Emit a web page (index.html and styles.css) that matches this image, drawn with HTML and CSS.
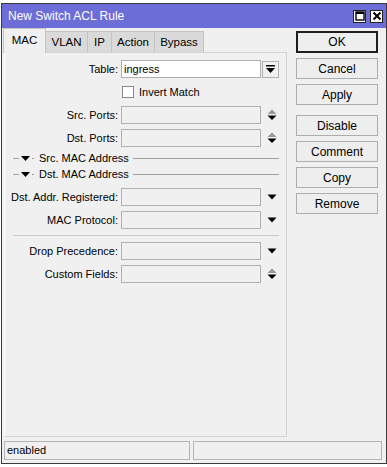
FILE: index.html
```html
<!DOCTYPE html>
<html lang="en">
<head>
    <meta charset="UTF-8">
    <meta name="viewport" content="width=device-width, initial-scale=1.0">
    <title>New Switch ACL Rule</title>
    <link rel="stylesheet" href="styles.css">
</head>
<body>
    <div class="window">
        <div class="titlebar">
            <span class="title">New Switch ACL Rule</span>
            <div class="title-buttons">
                <span class="tbtn">
                    <svg width="10" height="10" viewBox="0 0 10 10"><rect x="1" y="1" width="8" height="8" fill="none" stroke="#000" stroke-width="1.4"/><rect x="1" y="1" width="8" height="2" fill="#000"/></svg>
                </span>
                <span class="tbtn">
                    <svg width="10" height="10" viewBox="0 0 10 10"><path d="M1.5 1.5 L8.5 8.5 M8.5 1.5 L1.5 8.5" stroke="#000" stroke-width="2"/></svg>
                </span>
            </div>
        </div>

        <div class="content">
            <div class="main">
                <div class="tabs">
                    <div class="tab active mac">MAC</div>
                    <div class="tab vlan">VLAN</div>
                    <div class="tab ip">IP</div>
                    <div class="tab action">Action</div>
                    <div class="tab bypass">Bypass</div>
                </div>

                <div class="panel">
                    <div class="row">
                        <label>Table:</label>
                        <div class="input white">ingress</div>
                        <span class="drop-btn">
                            <svg width="9" height="8" viewBox="0 0 9 8"><rect x="0" y="0" width="9" height="1.5" fill="#000"/><path d="M0 3 H9 L4.5 8 Z" fill="#000"/></svg>
                        </span>
                    </div>

                    <div class="row">
                        <label></label>
                        <div class="check-wrap">
                            <span class="checkbox"></span>
                            <span>Invert Match</span>
                        </div>
                    </div>

                    <div class="row">
                        <label>Src. Ports:</label>
                        <div class="input"></div>
                        <span class="icon">
                            <svg width="10" height="12" viewBox="0 0 10 12"><path d="M0.5 5 L5 0.5 L9.5 5 Z" fill="#999"/><path d="M0.5 6.5 H9.5 L5 11 Z" fill="#000"/></svg>
                        </span>
                    </div>

                    <div class="row">
                        <label>Dst. Ports:</label>
                        <div class="input"></div>
                        <span class="icon">
                            <svg width="10" height="12" viewBox="0 0 10 12"><path d="M0.5 5 L5 0.5 L9.5 5 Z" fill="#999"/><path d="M0.5 6.5 H9.5 L5 11 Z" fill="#000"/></svg>
                        </span>
                    </div>

                    <div class="section first">
                        <span class="dash"></span>
                        <svg width="9" height="5" viewBox="0 0 9 5"><path d="M0 0 H9 L4.5 5 Z" fill="#000"/></svg>
                        <span class="dot"></span>
                        <span class="section-title">Src. MAC Address</span>
                        <span class="line"></span>
                    </div>

                    <div class="section">
                        <span class="dash"></span>
                        <svg width="9" height="5" viewBox="0 0 9 5"><path d="M0 0 H9 L4.5 5 Z" fill="#000"/></svg>
                        <span class="dot"></span>
                        <span class="section-title">Dst. MAC Address</span>
                        <span class="line"></span>
                    </div>

                    <div class="row after-section">
                        <label>Dst. Addr. Registered:</label>
                        <div class="input"></div>
                        <span class="icon">
                            <svg width="10" height="6" viewBox="0 0 10 6"><path d="M0.5 0.5 H9.5 L5 5.5 Z" fill="#000"/></svg>
                        </span>
                    </div>

                    <div class="row">
                        <label>MAC Protocol:</label>
                        <div class="input"></div>
                        <span class="icon">
                            <svg width="10" height="6" viewBox="0 0 10 6"><path d="M0.5 0.5 H9.5 L5 5.5 Z" fill="#000"/></svg>
                        </span>
                    </div>

                    <div class="divider"></div>

                    <div class="row after-divider">
                        <label>Drop Precedence:</label>
                        <div class="input"></div>
                        <span class="icon">
                            <svg width="10" height="6" viewBox="0 0 10 6"><path d="M0.5 0.5 H9.5 L5 5.5 Z" fill="#000"/></svg>
                        </span>
                    </div>

                    <div class="row">
                        <label>Custom Fields:</label>
                        <div class="input"></div>
                        <span class="icon">
                            <svg width="10" height="12" viewBox="0 0 10 12"><path d="M0.5 5 L5 0.5 L9.5 5 Z" fill="#999"/><path d="M0.5 6.5 H9.5 L5 11 Z" fill="#000"/></svg>
                        </span>
                    </div>
                </div>
            </div>

            <div class="side">
                <button class="default">OK</button>
                <button>Cancel</button>
                <button>Apply</button>
                <button class="spaced">Disable</button>
                <button>Comment</button>
                <button>Copy</button>
                <button>Remove</button>
            </div>
        </div>

        <div class="statusbar">
            <div class="status left">enabled</div>
            <div class="status right"></div>
        </div>
    </div>
</body>
</html>
```

FILE: styles.css
```css
* {
    margin: 0;
    padding: 0;
    box-sizing: border-box;
    font-family: 'Liberation Sans', Arial, sans-serif;
}

:root {
    --title-color: #6d6dd7;
    --face-color: #f0f0f0;
    --border-color: #adadad;
    --text-color: #000;
}

body {
    background-color: #fff;
    color: var(--text-color);
    font-size: 11px;
}

.window {
    width: 386px;
    height: 461px;
    margin: 3px 0 0 1px;
    border: 1px solid #3c3c3c;
    background-color: var(--face-color);
    display: flex;
    flex-direction: column;
}

.titlebar {
    height: 24px;
    background-color: var(--title-color);
    display: flex;
    align-items: center;
    justify-content: space-between;
    padding: 0 3px 0 6px;
}

.title {
    color: #fff;
    font-size: 12px;
}

.title-buttons {
    display: flex;
    gap: 4px;
}

.tbtn {
    width: 13px;
    height: 13px;
    background-color: #fff;
    border: 1px solid #222;
    display: flex;
    align-items: center;
    justify-content: center;
}

.content {
    display: flex;
    padding-left: 2px;
}

.main {
    width: 283px;
    display: flex;
    flex-direction: column;
}

.tabs {
    height: 24px;
    display: flex;
    align-items: flex-end;
    margin-left: -1px;
    position: relative;
    z-index: 1;
}

.tab {
    height: 21px;
    background-color: #dadada;
    border: 1px solid #c4c4c4;
    border-bottom: none;
    margin-left: -1px;
    display: flex;
    align-items: center;
    justify-content: center;
    font-size: 11.5px;
}

.tab.mac { width: 43px; margin-left: 0; }
.tab.vlan { width: 43px; }
.tab.ip { width: 25px; }
.tab.action { width: 44px; }
.tab.bypass { width: 50px; }

.tab.active {
    height: 25px;
    margin-bottom: -1px;
    background-color: var(--face-color);
    padding-bottom: 3px;
}

.panel {
    height: 385px;
    border: 1px solid #d4d4d4;
    border-left-color: #fff;
    padding-top: 7px;
    display: flex;
    flex-direction: column;
    gap: 5px;
}

.row {
    height: 18px;
    display: flex;
    align-items: center;
}

.row label {
    width: 116px;
    text-align: right;
    padding-right: 3px;
    flex-shrink: 0;
    white-space: nowrap;
}

.input {
    width: 140px;
    height: 18px;
    border: 1px solid #b0b0b0;
    background-color: var(--face-color);
    padding: 1px 2px;
    line-height: 14px;
}

.input.white {
    background-color: #fff;
}

.drop-btn {
    width: 17px;
    height: 17px;
    margin-left: 1px;
    border: 1px solid #b0b0b0;
    display: flex;
    align-items: center;
    justify-content: center;
}

.icon {
    width: 10px;
    margin-left: 6px;
    display: flex;
    align-items: center;
}

.check-wrap {
    display: flex;
    align-items: center;
    gap: 5px;
    padding-left: 1px;
}

.checkbox {
    width: 12px;
    height: 12px;
    background-color: #fff;
    border: 1px solid #8a8a8a;
}

.section {
    height: 16px;
    display: flex;
    align-items: center;
    padding-left: 8px;
    margin-top: -5px;
}

.section.first {
    margin-top: -2px;
}

.dash {
    width: 6px;
    height: 1px;
    background-color: #a0a0a0;
    margin-right: 2px;
}

.dot {
    width: 2px;
    height: 1px;
    background-color: #a0a0a0;
    margin: 0 5px 0 2px;
}

.section-title {
    white-space: nowrap;
}

.line {
    flex: 1;
    height: 1px;
    background-color: #a0a0a0;
    margin: 0 7px 0 4px;
}

.after-section {
    margin-top: 1px;
}

.divider {
    height: 1px;
    background-color: #c8c8c8;
    margin: 1px 7px 0 8px;
}

.after-divider {
    margin-top: 1px;
}

.side {
    display: flex;
    flex-direction: column;
    gap: 5px;
    padding: 3px 0 0 9px;
}

button {
    width: 82px;
    height: 21px;
    border: 1px solid var(--border-color);
    background-color: #eeeeee;
    color: var(--text-color);
    font-size: 12px;
    cursor: pointer;
}

button.default {
    height: 22px;
    border: 2px solid #1e1e1e;
}

button.spaced {
    margin-top: 5px;
}

.statusbar {
    display: flex;
    gap: 3px;
    padding: 4px 0 0 2px;
}

.status {
    height: 19px;
    border: 1px solid #b4b4b4;
    padding: 1px 2px;
    line-height: 15px;
}

.status.left {
    width: 186px;
}

.status.right {
    width: 189px;
}
```
